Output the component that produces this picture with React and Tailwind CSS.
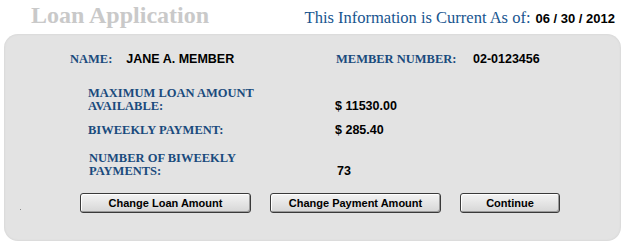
const serif = "font-['Liberation_Serif','Times_New_Roman',serif]";
const sans = "font-['Liberation_Sans',Arial,sans-serif]";

const Label = ({ children, className = '' }) => (
  <div className={`${serif} text-[12.5px] font-bold uppercase leading-[13px] text-[#1a4b7d] ${className}`}>
    {children}
  </div>
);

const Value = ({ children, className = '' }) => (
  <div className={`${sans} text-[12.5px] font-bold leading-[13px] text-black ${className}`}>{children}</div>
);

const Button = ({ children, width }) => (
  <button
    type="button"
    className={`${sans} ${width} h-[20px] rounded-[3px] border border-[#3a3a3a] bg-gradient-to-b from-[#f4f4f4] to-[#d6d6d6] text-[11px] font-bold text-black shadow-[inset_1px_1px_0_#ffffff,inset_-1px_-1px_0_#9a9a9a]`}
  >
    {children}
  </button>
);

const App = () => {
  return (
    <div className="h-[248px] w-[625px] overflow-hidden bg-white">
      <header className="flex h-[34px] items-start justify-between pl-[31px] pr-[10px] pt-[2px]">
        <h1 className={`${serif} text-[24px] font-bold leading-[26px] text-[#c9c9c9]`}>Loan Application</h1>
        <div className="mt-[6px] flex items-baseline gap-[5px]">
          <span className={`${serif} text-[16.5px] leading-[19px] text-[#17558f]`}>This Information is Current As of:</span>
          <span className={`${sans} text-[13px] font-bold text-black`}>06 / 30 / 2012</span>
        </div>
      </header>

      <section className="ml-[4px] h-[207px] w-[617px] rounded-[14px] bg-[#e3e3e3] shadow-[inset_0_0_3px_rgba(0,0,0,0.08)]">
        <div className="flex items-center pl-[66px] pt-[19px]">
          <div className="flex w-[266px] items-center gap-[14px]">
            <Label>Name:</Label>
            <Value>JANE A. MEMBER</Value>
          </div>
          <Label className="w-[137px]">Member Number:</Label>
          <Value>02-0123456</Value>
        </div>

        <div className="mt-[21px] flex items-end pl-[84px]">
          <Label className="w-[247px]">
            Maximum Loan Amount
            <br />
            Available:
          </Label>
          <Value>$ 11530.00</Value>
        </div>

        <div className="mt-[11px] flex items-end pl-[84px]">
          <Label className="w-[247px]">Biweekly Payment:</Label>
          <Value>$ 285.40</Value>
        </div>

        <div className="mt-[15px] flex items-end pl-[85px]">
          <Label className="w-[248px]">
            Number of Biweekly
            <br />
            Payments:
          </Label>
          <Value>73</Value>
        </div>

        <div className="mt-[15px] flex items-start">
          <span className="ml-[16px] mt-[16px] h-px w-px bg-[#8a8a8a]" />
          <div className="ml-[59px] flex gap-[19px]">
            <Button width="w-[171px]">Change Loan Amount</Button>
            <Button width="w-[171px]">Change Payment Amount</Button>
            <Button width="w-[100px]">Continue</Button>
          </div>
        </div>
      </section>
    </div>
  );
};

export default App;
